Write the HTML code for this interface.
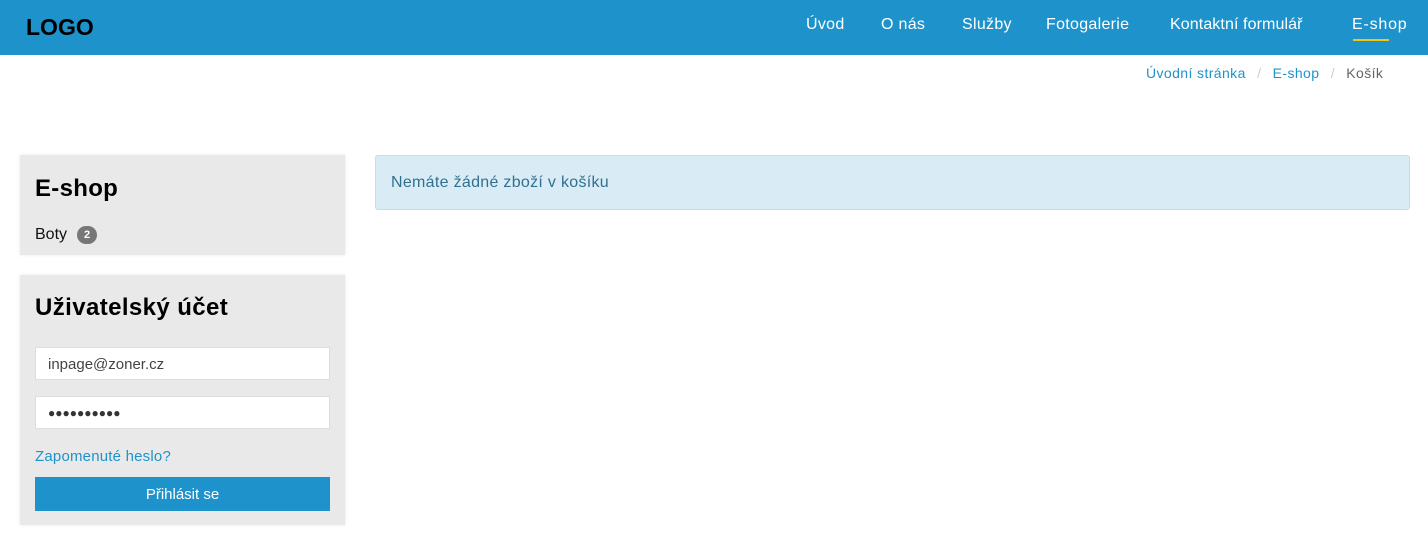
<!DOCTYPE html>
<html><head><meta charset="utf-8"><style>
body{margin:0;width:1428px;height:540px;background:#fff;font-family:"Liberation Sans",sans-serif;position:relative;overflow:hidden}
.a{position:absolute;white-space:nowrap}
.hdr{left:0;top:0;width:1428px;height:55px;background:#1e93cb}
.nav{top:16px;color:#fff;font-size:16px;letter-spacing:.3px}
.box{background:#e9e9e9;box-shadow:0 0 4px rgba(0,0,0,.08)}
.inp{background:#fff;border:1px solid #ddd;box-sizing:border-box;width:295px;height:33px;left:35px;font-size:15px;color:#444;padding:8px 12px}
</style></head><body>
<div class="a hdr"></div>
<div class="a" style="left:26px;top:14px;font-size:23px;font-weight:bold;color:#000">LOGO</div>
<div class="a nav" style="left:806px">Úvod</div>
<div class="a nav" style="left:881px">O nás</div>
<div class="a nav" style="left:962px">Služby</div>
<div class="a nav" style="left:1046px">Fotogalerie</div>
<div class="a nav" style="left:1170px;letter-spacing:.1px">Kontaktní formulář</div>
<div class="a nav" style="left:1352px;letter-spacing:.8px">E-shop</div>
<div class="a" style="left:1353px;top:39px;width:36px;height:2px;background:#f5c518"></div>
<div class="a" style="left:1146px;top:65px;font-size:14px;color:#1e93cb;letter-spacing:.4px">Úvodní stránka <span style="color:#ccc;margin:0 7px">/</span> E-shop <span style="color:#ccc;margin:0 7px">/</span> <span style="color:#666">Košík</span></div>

<div class="a box" style="left:20px;top:155px;width:325px;height:100px"></div>
<div class="a" style="left:35px;top:175px;font-size:24px;font-weight:bold;color:#000;letter-spacing:.3px">E-shop</div>
<div class="a" style="left:35px;top:226px;font-size:16px;color:#111">Boty</div>
<div class="a" style="left:77px;top:226px;width:20px;height:18px;border-radius:9px;background:#777;color:#fff;font-size:11px;font-weight:bold;text-align:center;line-height:18px">2</div>

<div class="a box" style="left:20px;top:275px;width:325px;height:250px"></div>
<div class="a" style="left:35px;top:294px;font-size:24px;font-weight:bold;color:#000;letter-spacing:.4px">Uživatelský účet</div>
<div class="a inp" style="top:347px">inpage@zoner.cz</div>
<div class="a inp" style="top:396px;font-size:12px;letter-spacing:0;padding-top:9px;color:#333">●●●●●●●●●●</div>
<div class="a" style="left:35px;top:448px;font-size:15px;color:#1e93cb;letter-spacing:.2px">Zapomenuté heslo?</div>
<div class="a" style="left:35px;top:477px;width:295px;height:34px;background:#1e93cb;color:#fff;font-size:15px;text-align:center;line-height:36px">Přihlásit se</div>

<div class="a" style="left:375px;top:155px;width:1033px;height:53px;background:#d9ecf5;border:1px solid #bfe0ee;border-radius:3px"></div>
<div class="a" style="left:391px;top:174px;font-size:16px;color:#31708f;letter-spacing:.3px">Nemáte žádné zboží v košíku</div>
</body></html>
